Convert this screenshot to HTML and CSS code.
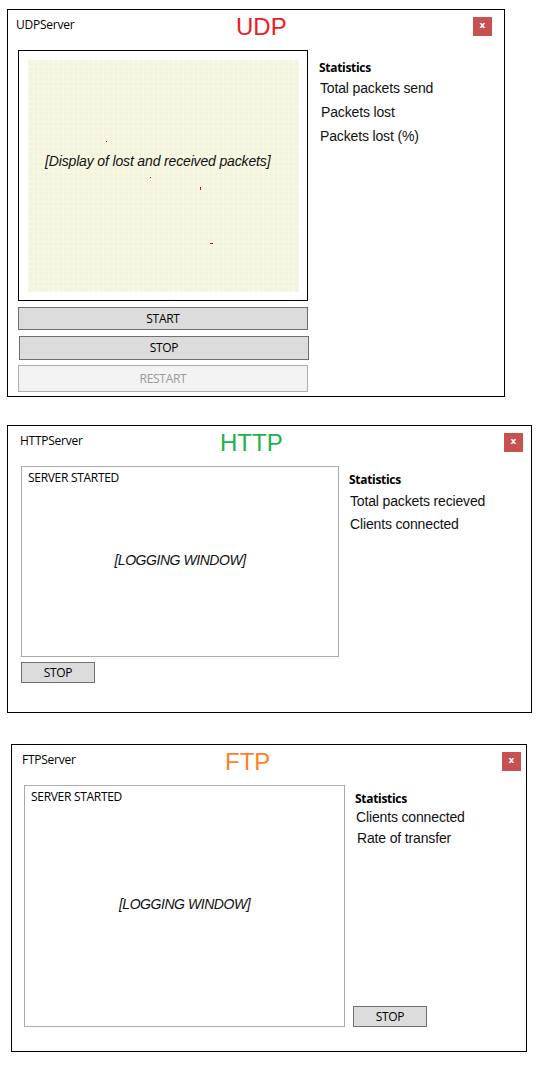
FILE: index.html
```html
<!DOCTYPE html>
<html lang="en">
<head>
<meta charset="utf-8">
<title>Servers</title>
<link rel="stylesheet" href="styles.css">
</head>
<body>
<main class="page">

  <section class="win win--udp">
    <header class="win-head">
      <span class="win-title">UDPServer</span>
      <span class="win-proto proto-udp">UDP</span>
      <button class="win-close" type="button">x</button>
    </header>
    <div class="win-body">
      <div class="win-main">
        <div class="plot-frame">
          <div class="plot">
            <span class="plot-label">[Display of lost and received packets]</span>
            <span class="dot" style="left:78px;top:81px;width:1px;height:1px"></span>
            <span class="dot" style="left:122px;top:117px;width:1px;height:1px"></span>
            <span class="dot" style="left:172px;top:127px;width:1px;height:3px"></span>
            <span class="dot" style="left:182px;top:183px;width:3px;height:1px"></span>
          </div>
        </div>
        <button class="btn btn--wide" type="button">START</button>
        <button class="btn btn--wide btn--shift" type="button">STOP</button>
        <button class="btn btn--wide btn--disabled" type="button" disabled>RESTART</button>
      </div>
      <aside class="stats">
        <div class="stats-title">Statistics</div>
        <div class="stat">Total packets send</div>
        <div class="stat stat--nudge">Packets lost</div>
        <div class="stat">Packets lost (%)</div>
      </aside>
    </div>
  </section>

  <section class="win win--http">
    <header class="win-head">
      <span class="win-title">HTTPServer</span>
      <span class="win-proto proto-http">HTTP</span>
      <button class="win-close" type="button">x</button>
    </header>
    <div class="win-body">
      <div class="win-main">
        <div class="log">
          <span class="log-line">SERVER STARTED</span>
          <span class="log-label">[LOGGING WINDOW]</span>
        </div>
        <button class="btn btn--small" type="button">STOP</button>
      </div>
      <aside class="stats">
        <div class="stats-title">Statistics</div>
        <div class="stat">Total packets recieved</div>
        <div class="stat">Clients connected</div>
      </aside>
    </div>
  </section>

  <section class="win win--ftp">
    <header class="win-head">
      <span class="win-title">FTPServer</span>
      <span class="win-proto proto-ftp">FTP</span>
      <button class="win-close" type="button">x</button>
    </header>
    <div class="win-body">
      <div class="win-main">
        <div class="log">
          <span class="log-line">SERVER STARTED</span>
          <span class="log-label">[LOGGING WINDOW]</span>
        </div>
      </div>
      <aside class="stats">
        <div class="stats-title">Statistics</div>
        <div class="stat">Clients connected</div>
        <div class="stat stat--nudge">Rate of transfer</div>
        <button class="btn btn--small btn--bottom" type="button">STOP</button>
      </aside>
    </div>
  </section>

</main>
</body>
</html>
```

FILE: styles.css
```css
* {
  box-sizing: border-box;
}

html, body {
  margin: 0;
  padding: 0;
  background: #ffffff;
}

body {
  font-family: "Open Sans", "Noto Sans", sans-serif;
  font-size: 12px;
  color: #000;
}

.page {
  display: flex;
  flex-direction: column;
  align-items: flex-start;
}

/* ---------- window ---------- */
.win {
  border: 1px solid #000;
  background: #fff;
  display: flex;
  flex-direction: column;
}

.win--udp {
  width: 498px;
  height: 388px;
  margin: 9px 0 0 7px;
  --title-w: 220px;
  --head-pl: 8px;
  --close-mr: 12px;
  --body-pl: 10px;
  --stats-gap: 10px;
}

.win--http {
  width: 525px;
  height: 288px;
  margin: 28px 0 0 7px;
  --title-w: 200px;
  --head-pl: 12px;
  --close-mr: 8px;
  --body-pl: 13px;
  --stats-gap: 10px;
}

.win--ftp {
  width: 516px;
  height: 308px;
  margin: 31px 0 0 11px;
  --title-w: 203px;
  --head-pl: 10px;
  --close-mr: 5px;
  --body-pl: 12px;
  --stats-gap: 8px;
}

.win-head {
  height: 40px;
  flex: 0 0 40px;
  display: flex;
  align-items: flex-start;
  padding-left: var(--head-pl);
}

.win-title {
  width: var(--title-w);
  flex: 0 0 var(--title-w);
  margin-top: 7px;
  line-height: 16px;
  font-size: 12px;
  letter-spacing: -0.25px;
}

.win-proto {
  margin-top: 3px;
  font-family: "Liberation Sans", Arial, sans-serif;
  font-size: 24px;
  line-height: 28px;
}

.proto-udp { color: #ed1c24; }
.proto-http { color: #22b14c; }
.proto-ftp { color: #ff7f27; }

.win-close {
  margin: 7px var(--close-mr) 0 auto;
  width: 19px;
  height: 19px;
  padding: 0 0 2px;
  border: 0;
  background: #c75050;
  color: #fff;
  font-family: "DejaVu Sans", sans-serif;
  font-weight: bold;
  font-size: 9px;
  line-height: 17px;
  text-align: center;
}

.win-body {
  display: flex;
  align-items: stretch;
  padding-left: var(--body-pl);
  gap: var(--stats-gap);
}

.win-main {
  display: flex;
  flex-direction: column;
  align-items: flex-start;
}

/* ---------- UDP plot ---------- */
.plot-frame {
  width: 290px;
  height: 251px;
  border: 1px solid #000;
  padding: 9px 8px 8px 9px;
  margin-bottom: 6px;
}

.plot {
  position: relative;
  width: 100%;
  height: 100%;
  background-color: #f4f4de;
  background-image:
    repeating-linear-gradient(90deg, rgba(255,255,245,0.35) 0 1px, transparent 1px 5px),
    repeating-linear-gradient(0deg, rgba(255,255,245,0.35) 0 1px, transparent 1px 5px);
  padding: 93px 0 0 17px;
}

.plot-label {
  display: block;
  font-family: "Liberation Sans", Arial, sans-serif;
  font-style: italic;
  font-size: 14px;
  line-height: 16px;
  letter-spacing: -0.15px;
  color: #111;
}

.dot {
  position: absolute;
  background: #e00000;
}

/* ---------- buttons ---------- */
.btn {
  font-family: "Open Sans", "Noto Sans", sans-serif;
  font-size: 12px;
  letter-spacing: -0.3px;
  color: #000;
  background: #dcdcdc;
  border: 1px solid #707070;
  padding: 0;
  text-align: center;
}

.btn--wide {
  width: 290px;
  height: 23px;
  line-height: 20px;
  margin-bottom: 6px;
}

.btn--shift {
  margin-left: 1px;
  height: 24px;
  margin-bottom: 5px;
}

.btn--disabled {
  height: 27px;
  color: #9a9a9a;
  background: #f3f3f3;
  border-color: #adadad;
}

.btn--small {
  width: 74px;
  height: 21px;
  line-height: 18px;
  margin-top: 5px;
}

.btn--bottom {
  margin-top: auto;
  margin-left: 0;
}

/* ---------- logs ---------- */
.log {
  display: grid;
  border: 1px solid #ababab;
  padding: 3px 6px;
}

.win--http .log {
  width: 318px;
  height: 191px;
}

.win--ftp .log {
  width: 321px;
  height: 242px;
}

.log-line,
.log-label {
  grid-area: 1 / 1;
}

.log-line {
  align-self: start;
  justify-self: start;
  line-height: 16px;
  letter-spacing: -0.3px;
}

.log-label {
  align-self: center;
  justify-self: center;
  font-family: "Liberation Sans", Arial, sans-serif;
  font-style: italic;
  font-size: 14px;
  line-height: 16px;
  letter-spacing: -0.45px;
  color: #111;
  margin-top: -4px;
}

/* ---------- statistics ---------- */
.stats {
  flex: 1;
  display: flex;
  flex-direction: column;
  align-items: flex-start;
}

.stats-title {
  font-weight: bold;
  font-size: 12px;
  line-height: 16px;
  letter-spacing: -0.3px;
}

.stat {
  font-family: "Liberation Sans", Arial, sans-serif;
  font-size: 14px;
  letter-spacing: -0.15px;
  color: #111;
}

.win--udp .stats { padding-top: 10px; }
.win--udp .stat { line-height: 24px; padding-left: 1px; }
.win--udp .stat--nudge { padding-left: 2px; }

.win--http .stats { padding-top: 6px; }
.win--http .stat { line-height: 23px; padding-left: 1px; }
.win--http .stats-title + .stat { margin-top: 2px; }

.win--ftp .stats { padding-top: 6px; padding-left: 2px; }
.win--ftp .stat { line-height: 21px; padding-left: 1px; }
.win--ftp .stat--nudge { padding-left: 2px; }
.win--ftp .btn--bottom { margin-left: -2px; }
```
